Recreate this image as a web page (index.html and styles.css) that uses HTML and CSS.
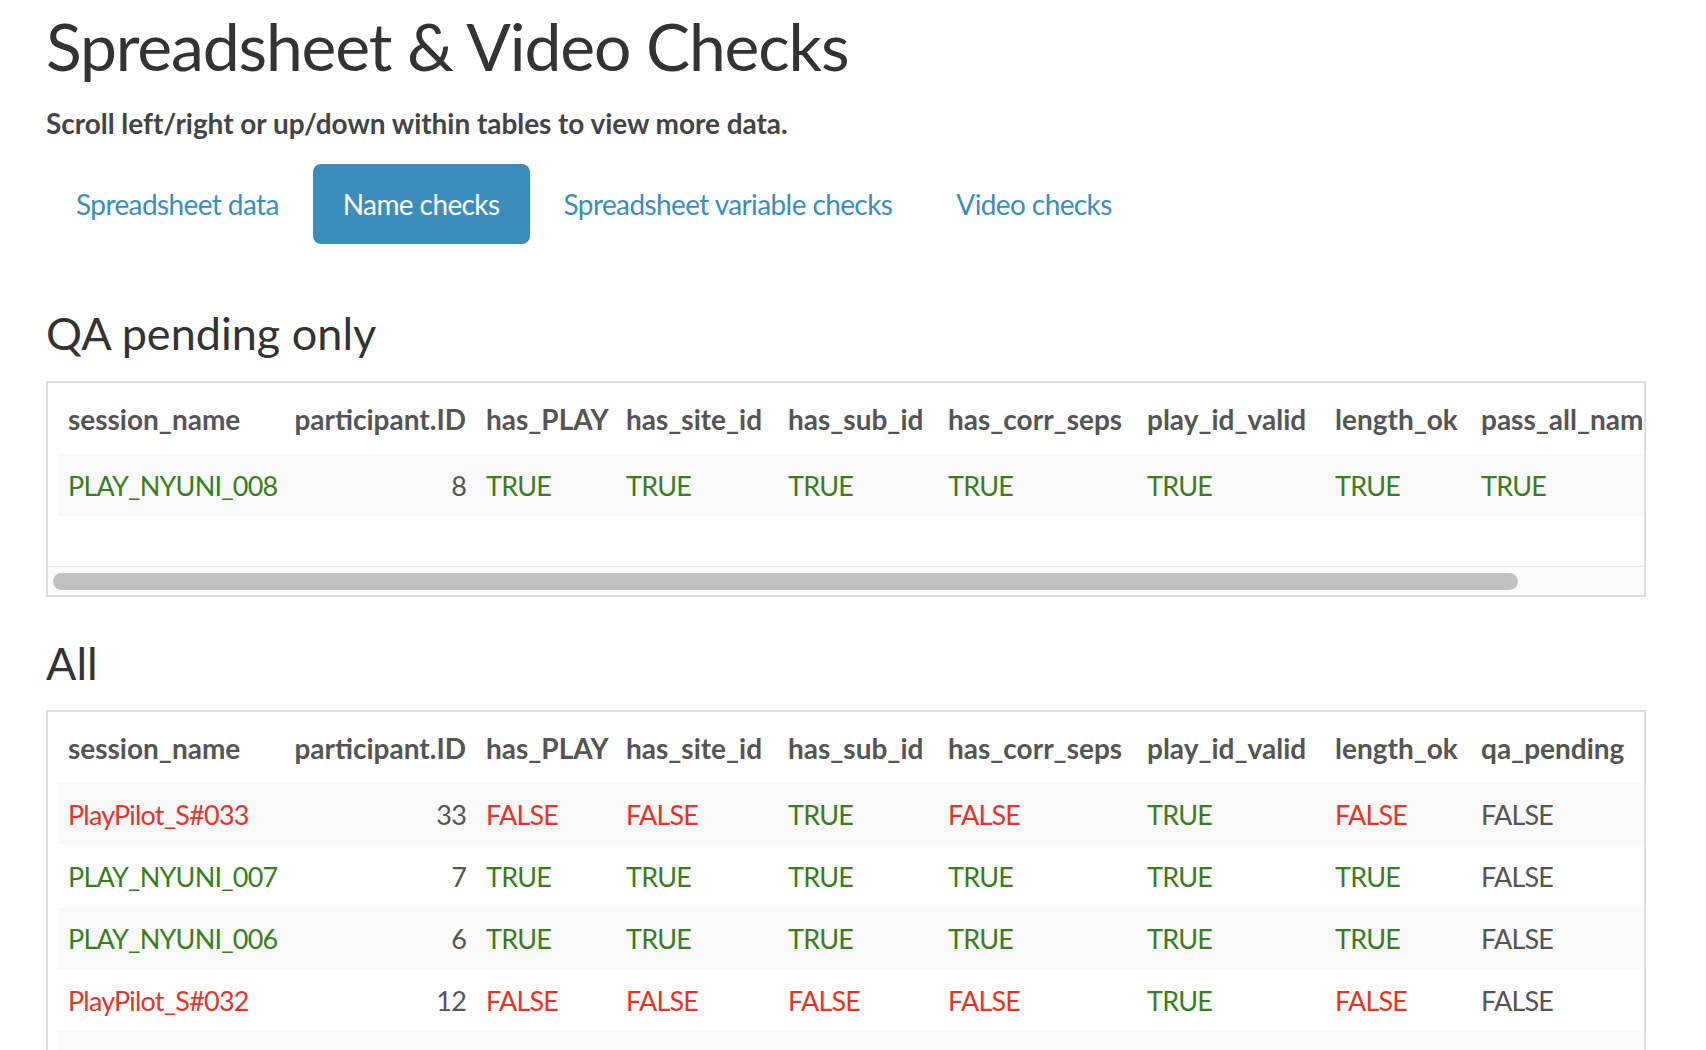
FILE: index.html
```html
<!DOCTYPE html>
<html lang="en">
<head>
<meta charset="utf-8">
<title>Spreadsheet &amp; Video Checks</title>
<link rel="stylesheet" href="styles.css">
</head>
<body>
<div class="page">
  <h1 class="title">Spreadsheet &amp; Video Checks</h1>
  <p class="hint">Scroll left/right or up/down within tables to view more data.</p>
  <ul class="tabs">
    <li><a class="tab">Spreadsheet data</a></li>
    <li><a class="tab active">Name checks</a></li>
    <li><a class="tab">Spreadsheet variable checks</a></li>
    <li><a class="tab">Video checks</a></li>
  </ul>
  <section class="pane">
    <h3 class="section-title first">QA pending only</h3>
    <div class="dt-wrap">
      <div class="dt-body dt-body-pad">
        <table class="dt dt-pending">
          <colgroup>
            <col class="w-name"><col class="w-id"><col class="w-play"><col class="w-site"><col class="w-sub"><col class="w-corr"><col class="w-valid"><col class="w-len"><col class="w-pass">
          </colgroup>
          <thead>
            <tr><th>session_name</th><th class="num">participant.ID</th><th>has_PLAY</th><th>has_site_id</th><th>has_sub_id</th><th>has_corr_seps</th><th>play_id_valid</th><th>length_ok</th><th>pass_all_name_checks</th></tr>
          </thead>
          <tbody>
            <tr><td class="ok">PLAY_NYUNI_008</td><td class="num plain">8</td><td class="ok">TRUE</td><td class="ok">TRUE</td><td class="ok">TRUE</td><td class="ok">TRUE</td><td class="ok">TRUE</td><td class="ok">TRUE</td><td class="ok">TRUE</td></tr>
          </tbody>
        </table>
      </div>
      <div class="hscroll"><div class="hscroll-thumb"></div></div>
    </div>

    <h3 class="section-title second">All</h3>
    <div class="dt-wrap">
      <div class="dt-body">
        <table class="dt dt-all">
          <colgroup>
            <col class="w-name"><col class="w-id"><col class="w-play"><col class="w-site"><col class="w-sub"><col class="w-corr"><col class="w-valid"><col class="w-len"><col class="w-qa">
          </colgroup>
          <thead>
            <tr><th>session_name</th><th class="num">participant.ID</th><th>has_PLAY</th><th>has_site_id</th><th>has_sub_id</th><th>has_corr_seps</th><th>play_id_valid</th><th>length_ok</th><th>qa_pending</th></tr>
          </thead>
          <tbody>
            <tr><td class="bad">PlayPilot_S#033</td><td class="num plain">33</td><td class="bad">FALSE</td><td class="bad">FALSE</td><td class="ok">TRUE</td><td class="bad">FALSE</td><td class="ok">TRUE</td><td class="bad">FALSE</td><td class="plain">FALSE</td></tr>
            <tr><td class="ok">PLAY_NYUNI_007</td><td class="num plain">7</td><td class="ok">TRUE</td><td class="ok">TRUE</td><td class="ok">TRUE</td><td class="ok">TRUE</td><td class="ok">TRUE</td><td class="ok">TRUE</td><td class="plain">FALSE</td></tr>
            <tr><td class="ok">PLAY_NYUNI_006</td><td class="num plain">6</td><td class="ok">TRUE</td><td class="ok">TRUE</td><td class="ok">TRUE</td><td class="ok">TRUE</td><td class="ok">TRUE</td><td class="ok">TRUE</td><td class="plain">FALSE</td></tr>
            <tr><td class="bad">PlayPilot_S#032</td><td class="num plain">12</td><td class="bad">FALSE</td><td class="bad">FALSE</td><td class="bad">FALSE</td><td class="bad">FALSE</td><td class="ok">TRUE</td><td class="bad">FALSE</td><td class="plain">FALSE</td></tr>
            <tr><td class="ok">PLAY_NYUNI_005</td><td class="num plain">5</td><td class="ok">TRUE</td><td class="ok">TRUE</td><td class="ok">TRUE</td><td class="ok">TRUE</td><td class="ok">TRUE</td><td class="ok">TRUE</td><td class="plain">FALSE</td></tr>
            <tr><td class="ok">PLAY_NYUNI_004</td><td class="num plain">4</td><td class="ok">TRUE</td><td class="ok">TRUE</td><td class="ok">TRUE</td><td class="ok">TRUE</td><td class="ok">TRUE</td><td class="ok">TRUE</td><td class="plain">FALSE</td></tr>
          </tbody>
        </table>
      </div>
    </div>
  </section>
</div>
</body>
</html>
```

FILE: styles.css
```css
html {
  scrollbar-width: none;
}

body {
  margin: 0;
  background: #fff;
  color: #333;
  font-family: Lato, "Noto Sans", "Liberation Sans", sans-serif;
}

.page {
  padding: 6px 60px 0 46px;
}

.title {
  margin: 0;
  font-size: 66px;
  line-height: 80px;
  font-weight: 400;
  letter-spacing: -1.15px;
  color: #333;
}

.hint {
  margin: 17px 0 0;
  font-size: 28px;
  line-height: 40px;
  font-weight: 700;
  letter-spacing: -0.05px;
  color: #444;
}

.tabs {
  display: flex;
  gap: 4px;
  list-style: none;
  margin: 21px 0 0;
  padding: 0;
}

.tab {
  display: block;
  padding: 20px 30px;
  font-size: 28px;
  line-height: 40px;
  letter-spacing: -0.6px;
  color: #3c8dbc;
  border-radius: 8px;
  cursor: pointer;
}

.tab.active {
  background: #3c8dbc;
  color: #fff;
}

.section-title {
  margin: 0;
  font-size: 45px;
  line-height: 52px;
  font-weight: 400;
  color: #333;
}

.section-title.first {
  margin-top: 63px;
  margin-bottom: 22px;
}

.section-title.second {
  margin-top: 40px;
  margin-bottom: 21px;
}

.dt-wrap {
  border: 2px solid #dedede;
}

.dt-body {
  overflow: hidden;
  padding: 9px 0 0 10px;
}

.dt-body-pad {
  padding-bottom: 50px;
}

.hscroll {
  box-sizing: border-box;
  height: 29px;
  padding: 6px 5px 0;
  border-top: 1px solid #e4e4e4;
  background: #fafafa;
}

.hscroll-thumb {
  width: 1465px;
  height: 17px;
  border-radius: 9px;
  background: #c1c1c1;
}

.dt {
  border-collapse: collapse;
  table-layout: fixed;
  font-size: 27px;
}

.dt-pending {
  width: 1707px;
}

.dt-all {
  width: 1586px;
}

.w-name { width: 224px; }
.w-id { width: 194px; }
.w-play { width: 140px; }
.w-site { width: 162px; }
.w-sub { width: 160px; }
.w-corr { width: 199px; }
.w-valid { width: 188px; }
.w-len { width: 146px; }
.w-pass { width: 294px; }
.w-qa { width: 173px; }

.dt th,
.dt td {
  line-height: 40px;
  text-align: left;
  white-space: nowrap;
  overflow: hidden;
}

.dt th {
  padding: 7px 10px 15px;
  font-size: 28px;
  font-weight: 700;
  color: #555;
}

.dt td {
  padding: 12px 10px 10px;
  letter-spacing: -0.8px;
}

.dt tbody tr:nth-child(odd) {
  background: #f9f9f9;
}

.dt .num {
  text-align: right;
}

.ok { color: #3a7d1e; }
.bad { color: #ea3228; }
.plain { color: #555; }
```
